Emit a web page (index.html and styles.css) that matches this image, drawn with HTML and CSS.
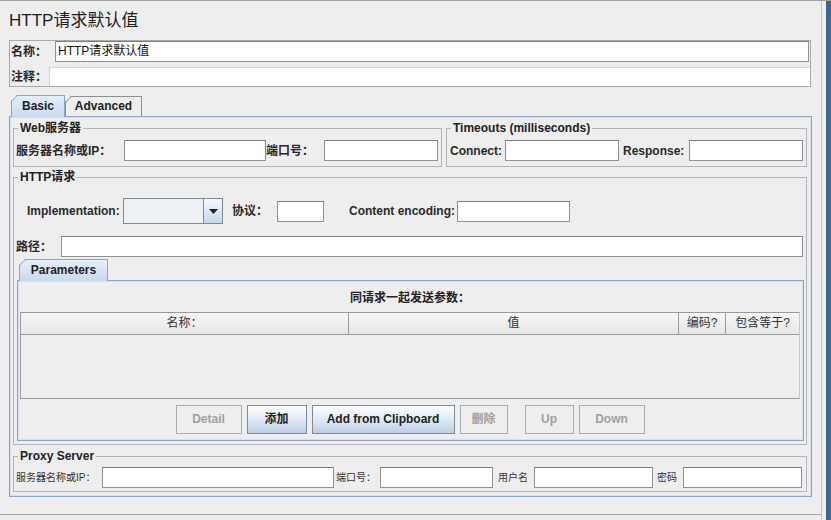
FILE: index.html
```html
<!DOCTYPE html>
<html lang="zh">
<head>
<meta charset="utf-8">
<title>HTTP请求默认值</title>
<link rel="stylesheet" href="styles.css">
</head>
<body>
<div class="frame">
  <div class="main">
    <h1 class="title">HTTP请求默认值</h1>
    <div class="namebox">
      <div class="namerow"><span class="lbl name-lbl">名称：</span><div class="field name-field">HTTP请求默认值</div></div>
      <div class="commentrow"><span class="lbl comment-lbl">注释：</span><div class="comment-field"></div></div>
    </div>
    <div class="tabs">
      <div class="tab sel tab-basic">Basic</div>
      <div class="tab tab-adv">Advanced</div>
    </div>
    <div class="tabpanel">
      <div class="toprow">
        <fieldset class="grp web">
          <legend>Web服务器</legend>
          <div class="frow">
            <span class="lbl w-host">服务器名称或IP：</span>
            <div class="field w-hostin"></div>
            <span class="lbl w-port">端口号：</span>
            <div class="field w-portin"></div>
          </div>
        </fieldset>
        <fieldset class="grp timeouts">
          <legend>Timeouts (milliseconds)</legend>
          <div class="frow">
            <span class="lbl t-conn">Connect:</span>
            <div class="field t-in"></div>
            <span class="lbl t-resp">Response:</span>
            <div class="field t-in"></div>
          </div>
        </fieldset>
      </div>
      <fieldset class="grp http">
        <legend>HTTP请求</legend>
        <div class="implrow">
          <span class="lbl h-impl">Implementation:</span>
          <div class="combo">
            <div class="combo-val"></div>
            <div class="combo-btn"><svg width="9" height="5" viewBox="0 0 9 5"><polygon points="0,0 9,0 4.5,5" fill="#222"/></svg></div>
          </div>
          <span class="lbl h-proto">协议：</span>
          <div class="field h-protoin"></div>
          <span class="lbl h-enc">Content encoding:</span>
          <div class="field h-encin"></div>
        </div>
        <div class="pathrow">
          <span class="lbl h-path">路径：</span>
          <div class="field h-pathin"></div>
        </div>
        <div class="ptabs">
          <div class="tab sel tab-params">Parameters</div>
        </div>
        <div class="ppanel">
          <div class="phead">同请求一起发送参数：</div>
          <div class="ptable">
            <div class="thead">
              <div class="th">名称：</div>
              <div class="th">值</div>
              <div class="th">编码?</div>
              <div class="th last">包含等于?</div>
            </div>
          </div>
          <div class="btnrow">
            <div class="btn dis b-detail">Detail</div>
            <div class="btn b-add">添加</div>
            <div class="btn b-clip">Add from Clipboard</div>
            <div class="btn dis b-del">删除</div>
            <div class="btn dis b-up">Up</div>
            <div class="btn dis b-down">Down</div>
          </div>
        </div>
      </fieldset>
      <fieldset class="grp proxy">
        <legend>Proxy Server</legend>
        <div class="frow">
          <span class="slbl p-host">服务器名称或IP：</span>
          <div class="field p-hostin"></div>
          <span class="slbl p-port">端口号：</span>
          <div class="field p-portin"></div>
          <span class="slbl p-user">用户名</span>
          <div class="field p-userin"></div>
          <span class="slbl p-pass">密码</span>
          <div class="field p-passin"></div>
        </div>
      </fieldset>
    </div>
    <div class="footer"></div>
  </div>
  <div class="rail-gap"></div>
  <div class="rail"></div>
</div>
</body>
</html>
```
FILE: styles.css
```css
* { box-sizing: border-box; }
html, body { margin: 0; padding: 0; }
body {
  width: 831px;
  height: 520px;
  overflow: hidden;
  background: #eeeeee;
  font-family: "Liberation Sans", "Noto Sans CJK SC", sans-serif;
  font-size: 12px;
  color: #2a2a2a;
}
.frame {
  display: flex;
  height: 520px;
  border-top: 1px solid #a0a0a0;
}
.main {
  width: 822px;
  flex-shrink: 0;
  border-right: 1px solid #c4c4c4;
  padding-left: 9px;
  display: flex;
  flex-direction: column;
}
.rail-gap { width: 4px; flex-shrink: 0; }
.rail { width: 5px; flex-shrink: 0; background: #3b6793; }

.title {
  margin: 10px 0 9px;
  height: 20px;
  font-size: 17px;
  font-weight: normal;
  line-height: 20px;
  color: #1e1e1e;
}

.lbl { font-weight: bold; white-space: nowrap; line-height: 14px; }
.field {
  background: #fff;
  border: 1px solid #929292;
  border-top-color: #7c7c7c;
  height: 21px;
  flex-shrink: 0;
}

/* name / comment box */
.namebox {
  width: 802px;
  border: 1px solid #a9a9a9;
  flex-shrink: 0;
}
.namerow { display: flex; align-items: center; height: 21px; }
.name-lbl { width: 45px; padding-left: 1px; }
.name-field {
  width: 754px;
  padding-left: 2px;
  line-height: 19px;
  color: #111;
}
.commentrow { display: flex; align-items: center; height: 19px; margin-top: 5px; }
.comment-lbl { width: 39px; padding-left: 1px; }
.comment-field {
  flex: 1;
  height: 19px;
  background: #fff;
  border-top: 1px solid #d8d8d8;
  border-left: 1px solid #d8d8d8;
}

/* tabs */
.tabs {
  display: flex;
  align-items: flex-end;
  height: 21px;
  margin-top: 8px;
  padding-left: 2px;
  flex-shrink: 0;
}
.tab {
  position: relative;
  height: 20px;
  border: 1px solid #8f8f8f;
  border-bottom: none;
  background: #eeeeee;
  font-weight: bold;
  text-align: center;
  line-height: 19px;
  color: #222;
  clip-path: polygon(6px 0, 100% 0, 100% 100%, 0 100%, 0 6px);
}
.tab::before {
  content: "";
  position: absolute;
  left: -1px;
  top: 5px;
  width: 9px;
  height: 1px;
  background: #8f8f8f;
  transform-origin: 0 0;
  transform: rotate(-45deg);
}
.tab.sel {
  height: 22px;
  margin-bottom: -1px;
  z-index: 1;
  border-color: #8da3c6;
  background: linear-gradient(#e6eefa, #c8daf0);
  line-height: 20px;
}
.tab.sel::before { background: #8da3c6; }
.tab-basic { width: 54px; }
.tab-adv { width: 77px; }
.tab-params { width: 89px; }

.tabpanel {
  width: 803px;
  height: 381px;
  flex-shrink: 0;
  border: 1px solid #8da3c6;
  box-shadow: inset 0 0 0 1px #d5e1f1;
  padding: 4px 4px 0 3px;
}
.toprow { display: flex; gap: 4px; }

/* group boxes */
.grp {
  margin: 0;
  min-width: 0;
  border: 1px solid #b4b4b4;
  padding: 5px 3px 5px 2px;
}
.grp legend {
  margin-left: 2px;
  padding: 0 2px;
  font-weight: bold;
  font-size: 12px;
  line-height: 14px;
  color: #222;
}
.frow { display: flex; align-items: center; height: 21px; }
.web { width: 429px; }
.timeouts { width: 361px; }
.w-host { width: 108px; }
.w-hostin { width: 142px; }
.w-port { width: 58px; }
.w-portin { width: 114px; }
.t-conn { width: 56px; padding-left: 1px; }
.t-in { width: 114px; }
.t-resp { width: 70px; padding-left: 4px; }

.http {
  margin-top: 3px;
  padding: 14px 3px 3px 2px;
}
.implrow {
  display: flex;
  align-items: center;
  height: 26px;
  padding-left: 11px;
}
.h-impl { width: 96px; }
.combo {
  width: 100px;
  height: 26px;
  display: flex;
  border: 1px solid #7d8b99;
  background: #edf1f6;
}
.combo-val { flex: 1; }
.combo-btn {
  width: 19px;
  border-left: 1px solid #7d8b99;
  background: linear-gradient(#f6f9fd, #c6d7ec);
  display: flex;
  align-items: center;
  justify-content: center;
}
.combo-btn svg { display: block; }
.h-proto { width: 45px; margin-left: 9px; }
.h-protoin { width: 47px; }
.h-enc { width: 108px; margin-left: 25px; }
.h-encin { width: 113px; }

.pathrow { display: flex; align-items: center; height: 21px; margin-top: 12px; }
.h-path { width: 45px; }
.h-pathin { flex: 1; }

.ptabs {
  display: flex;
  align-items: flex-end;
  height: 21px;
  margin-top: 2px;
  padding-left: 3px;
}
.ppanel {
  height: 161px;
  margin: 0 -1px 0 1px;
  border: 1px solid #8da3c6;
  box-shadow: inset 0 0 0 1px #d5e1f1;
  padding: 10px 3px 0 2px;
}
.phead {
  text-align: center;
  font-weight: bold;
  line-height: 14px;
  margin-bottom: 7px;
  color: #222;
}
.ptable {
  height: 87px;
  border: 1px solid #9a9a9a;
  border-right-color: #c8c8c8;
}
.thead {
  display: grid;
  grid-template-columns: 328px 330px 47px 1fr;
  height: 22px;
  border-bottom: 1px solid #9a9a9a;
}
.th {
  border-right: 1px solid #9a9a9a;
  background: linear-gradient(#f7f7f7, #e6e6e6);
  text-align: center;
  line-height: 21px;
  color: #333;
}
.th.last { border-right: none; }

.btnrow {
  display: flex;
  justify-content: center;
  gap: 5px;
  margin-top: 6px;
}
.btn {
  height: 29px;
  border: 1px solid #7d8b99;
  background: linear-gradient(#fdfeff, #e3ecf6 45%, #bccfe6);
  font-weight: bold;
  text-align: center;
  line-height: 27px;
  color: #222;
}
.btn.dis {
  border-color: #acacac;
  background: #eeeeee;
  color: #a0a0a0;
}
.b-detail { width: 66px; }
.b-add { width: 60px; }
.b-clip { width: 143px; }
.b-del { width: 48px; }
.b-up { width: 49px; margin-left: 12px; }
.b-down { width: 66px; }

.proxy {
  margin-top: 4px;
  padding: 4px 4px 3px 2px;
}
.slbl {
  font-size: 10px;
  line-height: 12px;
  white-space: nowrap;
  color: #333;
}
.p-host { width: 86px; }
.p-hostin { width: 232px; }
.p-port { width: 46px; padding-left: 2px; }
.p-portin { width: 113px; }
.p-user { width: 41px; padding-left: 5px; }
.p-userin { width: 119px; }
.p-pass { width: 30px; padding-left: 4px; }
.p-passin { width: 119px; }

.footer {
  margin-top: 17px;
  margin-left: -9px;
  border-top: 1px solid #a4a4a4;
}
```
